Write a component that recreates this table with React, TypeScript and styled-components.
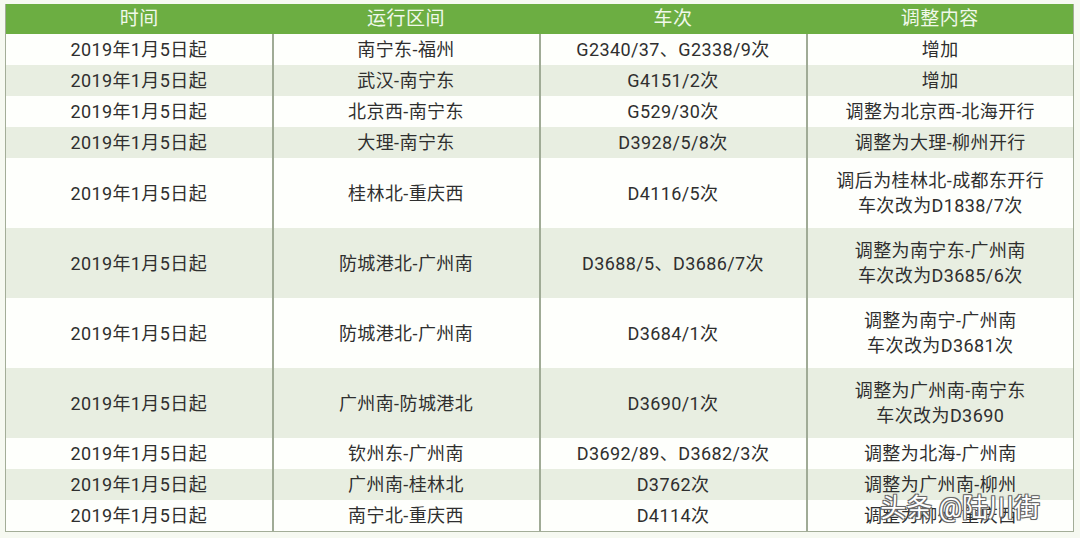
import React from "react";
import styled, { createGlobalStyle } from "styled-components";

type Row = {
    time: string;
    section: string;
    train: string;
    change: string[];
};

const rows: Row[] = [
    { time: "2019年1月5日起", section: "南宁东-福州", train: "G2340/37、G2338/9次", change: ["增加"] },
    { time: "2019年1月5日起", section: "武汉-南宁东", train: "G4151/2次", change: ["增加"] },
    { time: "2019年1月5日起", section: "北京西-南宁东", train: "G529/30次", change: ["调整为北京西-北海开行"] },
    { time: "2019年1月5日起", section: "大理-南宁东", train: "D3928/5/8次", change: ["调整为大理-柳州开行"] },
    { time: "2019年1月5日起", section: "桂林北-重庆西", train: "D4116/5次", change: ["调后为桂林北-成都东开行", "车次改为D1838/7次"] },
    { time: "2019年1月5日起", section: "防城港北-广州南", train: "D3688/5、D3686/7次", change: ["调整为南宁东-广州南", "车次改为D3685/6次"] },
    { time: "2019年1月5日起", section: "防城港北-广州南", train: "D3684/1次", change: ["调整为南宁-广州南", "车次改为D3681次"] },
    { time: "2019年1月5日起", section: "广州南-防城港北", train: "D3690/1次", change: ["调整为广州南-南宁东", "车次改为D3690"] },
    { time: "2019年1月5日起", section: "钦州东-广州南", train: "D3692/89、D3682/3次", change: ["调整为北海-广州南"] },
    { time: "2019年1月5日起", section: "广州南-桂林北", train: "D3762次", change: ["调整为广州南-柳州"] },
    { time: "2019年1月5日起", section: "南宁北-重庆西", train: "D4114次", change: ["调整为柳州-重庆西"] },
];

const GlobalStyle = createGlobalStyle`
    body {
        margin: 0;
        background: #f6f9f1;
        font-family: Roboto, "Noto Sans CJK SC", sans-serif;
    }
`;

const Page = styled.div`
    position: relative;
    width: 1080px;
    height: 538px;
    padding: 4px 6px 0 5px;
    box-sizing: border-box;
`;

const Table = styled.table`
    width: 100%;
    border-collapse: collapse;
    table-layout: fixed;
    border: 1.5px solid #a3ad98;
    border-top: none;
`;

const HeadCell = styled.th`
    background: #6cae42;
    color: #f0f8ea;
    font-size: 19px;
    font-weight: 400;
    height: 30px;
    padding: 0;
    text-align: center;
    line-height: 30px;
    letter-spacing: 0.5px;
`;

const BodyRow = styled.tr<{ $shade: boolean }>`
    background: ${(p) => (p.$shade ? "#e8eee1" : "#fefffc")};
`;

const Cell = styled.td<{ $tall: boolean }>`
    height: ${(p) => (p.$tall ? "70px" : "31px")};
    padding: 0;
    text-align: center;
    vertical-align: middle;
    font-size: 18px;
    letter-spacing: 0.4px;
    line-height: 25px;
    color: #2f2f2f;
    border-left: 2px solid #a0ab96;
    &:first-child {
        border-left: none;
    }
`;

const Watermark = styled.div`
    position: absolute;
    right: 40px;
    top: 490px;
    font-size: 26px;
    line-height: 36px;
    color: #ffffff;
    white-space: nowrap;
    text-shadow: -1px -1px 0 #666, 1px -1px 0 #666, -1px 1px 0 #666, 1px 1px 0 #666, 0 0 2px #555;
`;

const App = () => {
    return (
        <Page>
            <GlobalStyle />
            <Table>
                <thead>
                    <tr>
                        <HeadCell>时间</HeadCell>
                        <HeadCell>运行区间</HeadCell>
                        <HeadCell>车次</HeadCell>
                        <HeadCell>调整内容</HeadCell>
                    </tr>
                </thead>
                <tbody>
                    {rows.map((r, i) => {
                        const tall = r.change.length > 1;
                        return (
                            <BodyRow key={i} $shade={i % 2 === 1}>
                                <Cell $tall={tall}>{r.time}</Cell>
                                <Cell $tall={tall}>{r.section}</Cell>
                                <Cell $tall={tall}>{r.train}</Cell>
                                <Cell $tall={tall}>
                                    {r.change.map((c, j) => (
                                        <div key={j}>{c}</div>
                                    ))}
                                </Cell>
                            </BodyRow>
                        );
                    })}
                </tbody>
            </Table>
            <Watermark>头条 @陆川街</Watermark>
        </Page>
    );
};

export default App;
